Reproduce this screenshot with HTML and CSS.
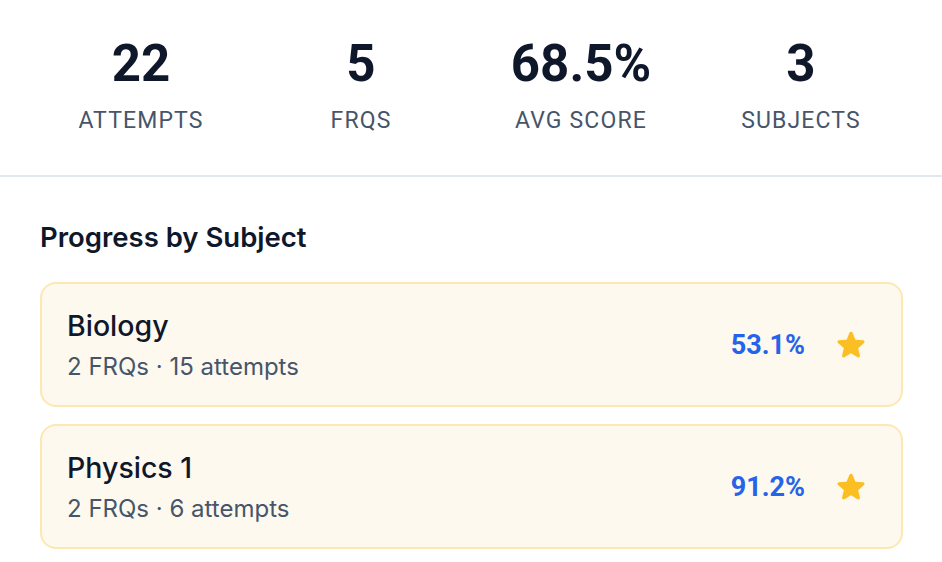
FILE: index.html
```html
<!DOCTYPE html>
<html lang="en">
<head>
<meta charset="utf-8">
<title>Progress</title>
<link rel="stylesheet" href="styles.css">
</head>
<body>
<div class="stats">
  <div class="stat"><div class="stat-value">22</div><div class="stat-label">ATTEMPTS</div></div>
  <div class="stat"><div class="stat-value">5</div><div class="stat-label">FRQS</div></div>
  <div class="stat"><div class="stat-value">68.5%</div><div class="stat-label">AVG SCORE</div></div>
  <div class="stat"><div class="stat-value">3</div><div class="stat-label">SUBJECTS</div></div>
</div>
<div class="section">
  <h2 class="section-title">Progress by Subject</h2>
  <div class="card">
    <div class="card-info">
      <div class="card-title">Biology</div>
      <div class="card-sub">2 FRQs · 15 attempts</div>
    </div>
    <div class="card-right">
      <span class="card-pct">53.1%</span>
      <svg class="star" viewBox="0 0 24 24"><path d="M12 17.27l4.15 2.51c.76.46 1.69-.22 1.49-1.08l-1.1-4.72 3.67-3.18c.67-.58.31-1.68-.57-1.75l-4.83-.41-1.89-4.46c-.34-.81-1.5-.81-1.84 0L9.19 8.63l-4.83.41c-.88.07-1.24 1.17-.57 1.75l3.67 3.18-1.1 4.72c-.2.86.73 1.54 1.49 1.08L12 17.27z"/></svg>
    </div>
  </div>
  <div class="card">
    <div class="card-info">
      <div class="card-title">Physics 1</div>
      <div class="card-sub">2 FRQs · 6 attempts</div>
    </div>
    <div class="card-right">
      <span class="card-pct">91.2%</span>
      <svg class="star" viewBox="0 0 24 24"><path d="M12 17.27l4.15 2.51c.76.46 1.69-.22 1.49-1.08l-1.1-4.72 3.67-3.18c.67-.58.31-1.68-.57-1.75l-4.83-.41-1.89-4.46c-.34-.81-1.5-.81-1.84 0L9.19 8.63l-4.83.41c-.88.07-1.24 1.17-.57 1.75l3.67 3.18-1.1 4.72c-.2.86.73 1.54 1.49 1.08L12 17.27z"/></svg>
    </div>
  </div>
</div>
</body>
</html>
```
FILE: styles.css
```css
html, body {
  margin: 0;
  padding: 0;
  background: #ffffff;
}
body {
  font-family: "Roboto", "Inter", "Noto Sans", sans-serif;
  color: #0f172a;
}
.stats {
  display: grid;
  grid-template-columns: repeat(4, 1fr);
  column-gap: 18px;
  padding: 34px 40px 40px;
  border-bottom: 2px solid #e2e8f0;
}
.stat {
  display: flex;
  flex-direction: column;
  align-items: center;
}
.stat-value {
  font-size: 51px;
  font-weight: 700;
  line-height: 60px;
  color: #0f172a;
}
.stat-label {
  font-size: 23px;
  line-height: 28px;
  letter-spacing: 0.05em;
  color: #475569;
  margin-top: 13px;
}
.section {
  padding: 0 39px 0 40px;
}
.section-title {
  font-family: "Inter", "Roboto", sans-serif;
  font-size: 27.5px;
  font-weight: 600;
  line-height: 34px;
  margin: 43px 0 28px;
  color: #0f172a;
}
.card {
  display: flex;
  align-items: center;
  justify-content: space-between;
  height: 125px;
  box-sizing: border-box;
  padding: 0 31px 0 25px;
  margin-bottom: 17px;
  background: #fef9ef;
  border: 2px solid #fde8b4;
  border-radius: 16px;
}
.card-info {
  display: flex;
  flex-direction: column;
  font-family: "Inter", "Roboto", sans-serif;
}
.card-title {
  font-size: 28.5px;
  line-height: 36px;
  font-weight: 450;
  color: #0f172a;
}
.card-sub {
  font-size: 24px;
  line-height: 30px;
  margin-top: 8px;
  color: #475569;
}
.card-right {
  display: flex;
  align-items: center;
  gap: 27px;
}
.card-pct {
  font-size: 27px;
  font-weight: 700;
  color: #2563eb;
}
.star {
  width: 38px;
  height: 38px;
  fill: #fbbf24;
}
```
